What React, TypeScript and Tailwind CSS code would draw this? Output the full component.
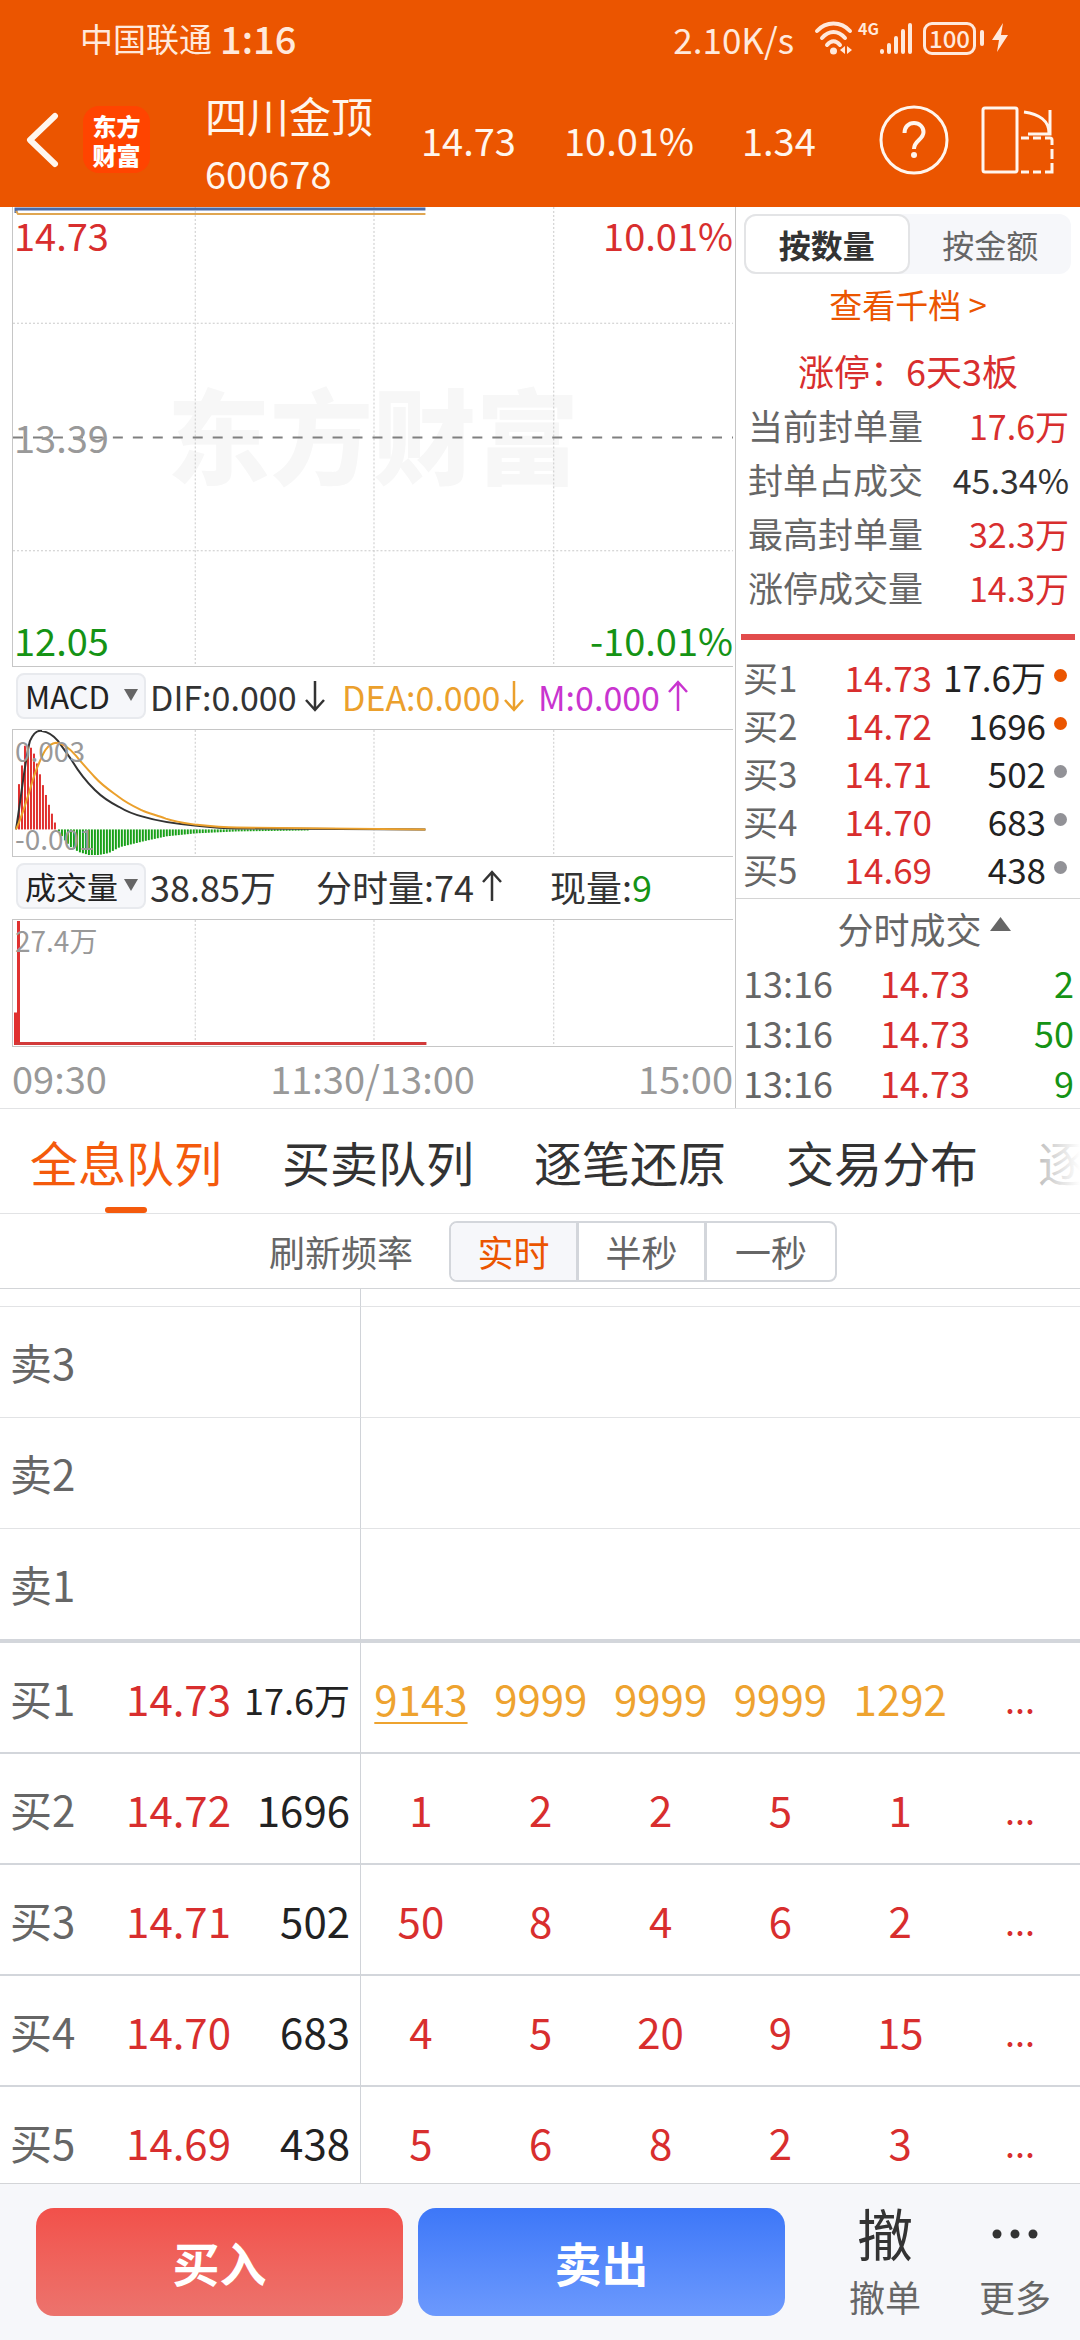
/**
 * Stock level-2 queue page
 *
 * Intraday charts and order book on top, full order queue below, trade bar at the bottom
 */

import React, { useState } from 'react';
import clsx from 'clsx';

type Point = [number, number];

const SEAL_STATS = [
  { label: '当前封单量', value: '17.6万', up: true },
  { label: '封单占成交', value: '45.34%', up: false },
  { label: '最高封单量', value: '32.3万', up: true },
  { label: '涨停成交量', value: '14.3万', up: true },
];

const BIDS = [
  { label: '买1', price: '14.73', volume: '17.6万', hot: true, queue: ['9143', '9999', '9999', '9999', '1292'] },
  { label: '买2', price: '14.72', volume: '1696', hot: true, queue: ['1', '2', '2', '5', '1'] },
  { label: '买3', price: '14.71', volume: '502', hot: false, queue: ['50', '8', '4', '6', '2'] },
  { label: '买4', price: '14.70', volume: '683', hot: false, queue: ['4', '5', '20', '9', '15'] },
  { label: '买5', price: '14.69', volume: '438', hot: false, queue: ['5', '6', '8', '2', '3'] },
];

const ASKS = ['卖3', '卖2', '卖1'];

const TRADES = [
  { time: '13:16', price: '14.73', volume: '2' },
  { time: '13:16', price: '14.73', volume: '50' },
  { time: '13:16', price: '14.73', volume: '9' },
];

const TABS = ['全息队列', '买卖队列', '逐笔还原', '交易分布', '逐笔成交'];
const RATES = ['实时', '半秒', '一秒'];

// Top of each red MACD bar, one bar every 3 units
const MACD_UP = [55, 36, 16, 17, 18, 24, 34, 45, 56, 66, 76, 85, 94];
// Envelope of the green MACD bars: x, depth
const MACD_DOWN: Point[] = [
  [45, 2], [50, 10], [57, 18], [65, 23], [75, 26], [85, 26], [95, 24], [106, 18],
  [130, 12], [153, 7], [182, 4], [224, 2], [300, 1],
];

const depthAt = (x: number) => {
  for (let i = 1; i < MACD_DOWN.length; i++) {
    const [x0, d0] = MACD_DOWN[i - 1];
    const [x1, d1] = MACD_DOWN[i];
    if (x <= x1) return d0 + ((d1 - d0) * (x - x0)) / (x1 - x0);
  }
  return 0;
};

const GREEN_BARS = Array.from({ length: 84 }, (_, i) => 45 + i * 3);

const StatusBar = () => (
  <div className="flex h-[76px] items-center pl-20 pr-[72px] text-[#ffe9dc]">
    <span className="text-[33px] leading-none">中国联通</span>
    <span className="ml-2 text-[38px] font-medium leading-none">1:16</span>
    <span className="ml-auto text-[35px] leading-none">2.10K/s</span>
    <svg className="ml-5 h-9 w-10" viewBox="0 0 40 36" fill="none" stroke="currentColor" strokeWidth="4" strokeLinecap="round">
      <path d="M3 11C12 1 27 1 36 11" />
      <path d="M8 18C15 10 24 10 31 18" />
      <path d="M13 25C17 20 22 20 26 25" />
      <circle cx="19.500" cy="31" r="3.500" fill="currentColor" stroke="none" />
      <path d="M31 26v8l-5-4zM33 26v8l5-4z" fill="currentColor" stroke="none" />
    </svg>
    <div className="ml-1 flex h-9 items-start">
      <span className="text-[16px] font-bold leading-none">4G</span>
      <svg className="h-9 w-9" viewBox="0 0 36 36" fill="none" stroke="currentColor" strokeWidth="4" strokeLinecap="round">
        <path d="M3 31v1M10 25v7M17 18v14M24 11v21M31 5v27" />
      </svg>
    </div>
    <div className="ml-2 flex items-center">
      <span className="flex h-[33px] w-[53px] items-center justify-center rounded-[9px] border-3 border-current text-[24px] font-medium leading-none">
        100
      </span>
      <span className="ml-1 h-4 w-1 rounded-full bg-current" />
    </div>
    <svg className="ml-2 h-8 w-4" viewBox="0 0 16 32" fill="currentColor">
      <path d="M11 1L0 18h7L5 30 16 13H9z" />
    </svg>
  </div>
);

const Header = () => (
  <header className="bg-[#eb5500] text-[#fff6ee]">
    <StatusBar />
    <div className="flex h-[131px] items-center pb-1 pl-[25px] pr-[25px]">
      <button aria-label="返回" className="shrink-0">
        <svg className="h-14 w-9" viewBox="0 0 36 56" fill="none" stroke="currentColor" strokeWidth="6" strokeLinecap="round" strokeLinejoin="round">
          <path d="M30 4L5 28l25 24" />
        </svg>
      </button>
      <div className="ml-[22px] flex size-[67px] shrink-0 items-center justify-center rounded-2xl bg-[#ff4400] text-[24px] font-black leading-[29px] text-white">
        <span className="w-12 break-all">东方财富</span>
      </div>
      <div className="ml-[55px] flex flex-col pt-2">
        <h1 className="text-[42px] leading-[58px]">四川金顶</h1>
        <span className="text-[38px] leading-[58px]">600678</span>
      </div>
      <div className="ml-12 flex flex-1 items-center gap-12 text-[38px]">
        <span>14.73</span>
        <span>10.01%</span>
        <span>1.34</span>
      </div>
      <button aria-label="帮助" className="shrink-0">
        <svg className="size-[70px]" viewBox="0 0 70 70" fill="none" stroke="currentColor" strokeWidth="3">
          <circle cx="35" cy="35" r="33" />
          <path d="M25.500 28c0-6 4-10 9.500-10s9.500 4 9.500 9c0 8-9.500 8-9.500 17" strokeWidth="4" />
          <circle cx="35" cy="50" r="3" fill="currentColor" stroke="none" />
        </svg>
      </button>
      <button aria-label="横屏" className="ml-8 shrink-0">
        <svg className="h-[68px] w-[74px]" viewBox="0 0 74 68" fill="none" stroke="currentColor" strokeWidth="3">
          <rect x="2" y="2" width="34" height="64" rx="2" />
          <path d="M43 6C58 8 68 15 68 27M69 4v24H47" />
          <path d="M40 32h8M52 32h8M64 32h5q2 0 2 2v5M71 43v10M71 57v9h-7M60 66h-8M48 66h-8" />
        </svg>
      </button>
    </div>
  </header>
);

interface IndicatorSelectProps {
  label: string;
  options: string[];
}

const IndicatorSelect: React.FC<IndicatorSelectProps> = ({ label, options }) => (
  <div className="relative h-[46px] w-[130px] shrink-0">
    <select
      aria-label={label}
      className="block h-full w-full appearance-none rounded-lg border-2 border-[#e8eaee] bg-[#f6f7fa] pl-[7px] text-[31px] leading-[42px] text-[#222]"
    >
      {options.map((option) => (
        <option key={option}>{option}</option>
      ))}
    </select>
    <svg className="pointer-events-none absolute right-2 top-4 h-3 w-[14px]" viewBox="0 0 14 12" fill="#666">
      <path d="M0 0h14L7 12z" />
    </svg>
  </div>
);

const Arrow = ({ up = false }: { up?: boolean }) => (
  <svg className="h-8 w-5 shrink-0" viewBox="0 0 20 32" fill="none" stroke="currentColor" strokeWidth="2.500">
    {up ? <path d="M10 31V3M1 12l9-10 9 10" /> : <path d="M10 1v28M1 20l9 10 9-10" />}
  </svg>
);

const GridColumns = ({ height }: { height: number }) => (
  <path
    d={`M182.500 0V${height}M361.500 0V${height}M541.500 0V${height}`}
    stroke="#c9c9c9"
    strokeDasharray="2 2"
    fill="none"
  />
);

const PriceChart = () => (
  <div className="relative h-[460px] border-b border-l border-[#c6c6c6] text-[38px] leading-[56px]">
    <div className="absolute inset-0 flex items-center justify-center pb-2 text-[103px] font-black text-[#f7f7f7]">
      东方财富
    </div>
    <svg className="absolute inset-0 h-full w-full" viewBox="0 0 721 460" preserveAspectRatio="none" fill="none">
      <GridColumns height={460} />
      <path d="M0 116.500H721M0 344.500H721" stroke="#c9c9c9" strokeDasharray="2 2" />
      <path d="M0 231H721" stroke="#808080" strokeWidth="2" strokeDasharray="10 10" />
      <path d="M3 6V2H413" stroke="#4a6ba8" strokeWidth="3" />
      <path d="M3 4l2 3H413" stroke="#e0a651" strokeWidth="2" />
    </svg>
    <span className="absolute left-px top-0 text-[#d82e2e]">14.73</span>
    <span className="absolute right-0 top-0 text-[#d82e2e]">10.01%</span>
    <span className="absolute left-px top-[202px] text-[#999]">13.39</span>
    <span className="absolute bottom-0 left-px leading-[52px] text-[#159315]">12.05</span>
    <span className="absolute bottom-0 right-0 leading-[52px] text-[#159315]">-10.01%</span>
  </div>
);

const MacdChart = () => (
  <div className="relative h-32 border-y border-l border-[#c6c6c6] text-[28px] leading-8 text-[#999]">
    <svg className="absolute inset-0 h-full w-full" viewBox="0 0 721 128" preserveAspectRatio="none" fill="none">
      <GridColumns height={128} />
      {MACD_UP.map((top, i) => (
        <rect key={i} x={5 + i * 3} y={top} width="2" height={101 - top} fill="#e0302f" />
      ))}
      {GREEN_BARS.map((x) => (
        <rect key={x} x={x} y="101" width="2" height={depthAt(x)} fill="#18a018" />
      ))}
      <path
        d="M3 101C8 70 12 30 17 11C21 2 25 0 29 1C35 2 40 5 45 11C50 18 54 24 59 31C66 43 74 53 82 61C90 69 98 74 106 78C114 83 122 86 130 88C143 92 160 95 182 97C200 99 215 100 224 100L413 101"
        stroke="#333"
        strokeWidth="2"
      />
      <path
        d="M3 101C9 88 12 76 16 64C20 50 22 42 26 34C30 24 34 14 43 13C50 13 56 18 63 26C70 35 76 41 82 48C90 57 98 62 106 68C115 75 122 78 130 82C140 86 148 88 153 90C165 94 175 95 182 96C200 98 215 99 224 99L413 101"
        stroke="#eba02c"
        strokeWidth="2"
      />
    </svg>
    <span className="absolute left-0.5 top-1">0.003</span>
    <span className="absolute bottom-0.5 left-0.5">-0.001</span>
  </div>
);

const VolumeChart = () => (
  <div className="relative h-32 border-y border-l border-[#c6c6c6] text-[28px] leading-8 text-[#999]">
    <svg className="absolute inset-0 h-full w-full" viewBox="0 0 721 128" preserveAspectRatio="none" fill="none">
      <GridColumns height={128} />
      <path d="M2.500 94V127M5.500 1V127" stroke="#e0302f" strokeWidth="3" />
      <path d="M2 125.500H414" stroke="#d23a3a" strokeWidth="3" />
    </svg>
    <span className="absolute left-0.5 top-1">27.4万</span>
  </div>
);

const ChartColumn = () => (
  <div className="flex flex-col pl-3 pr-0.5">
    <PriceChart />
    <div className="flex h-[62px] items-center whitespace-nowrap pb-1 pl-1 text-[34px] text-[#333]">
      <IndicatorSelect label="副图指标一" options={['MACD', 'KDJ', 'RSI']} />
      <span className="ml-1 flex w-48 items-center gap-2">DIF:0.000<Arrow /></span>
      <span className="flex w-[196px] items-center gap-1 text-[#eba02c]">DEA:0.000<Arrow /></span>
      <span className="flex items-center gap-2 text-[#c934cf]">M:0.000<Arrow up /></span>
    </div>
    <MacdChart />
    <div className="flex h-[62px] items-center whitespace-nowrap pb-1 pl-1 text-[36px] text-[#333]">
      <IndicatorSelect label="副图指标二" options={['成交量', '成交额']} />
      <span className="ml-1">38.85万</span>
      <span className="ml-10 flex items-center gap-2">分时量:74<Arrow up /></span>
      <span className="ml-12">
        现量:<span className="text-[#159315]">9</span>
      </span>
    </div>
    <VolumeChart />
    <div className="flex h-[61px] items-center justify-between text-[38px] text-[#999]">
      <span>09:30</span>
      <span>11:30/13:00</span>
      <span>15:00</span>
    </div>
  </div>
);

const BookColumn = () => {
  const [mode, setMode] = useState('按数量');

  return (
    <div className="flex flex-col border-l border-[#c6c6c6] pt-[7px] text-[35px]">
      <div className="ml-2 mr-[9px] flex h-[60px] rounded-xl bg-[#f6f7fa] text-[32px]">
        {['按数量', '按金额'].map((item) => (
          <button
            key={item}
            onClick={() => setMode(item)}
            className={clsx(
              'flex-1 rounded-xl',
              mode === item ? 'border-2 border-[#e3e4e6] bg-white font-bold text-[#333]' : 'text-[#666]',
            )}
          >
            {item}
          </button>
        ))}
      </div>
      <a href="#depth" className="block h-[66px] text-center text-[33px] leading-[60px] text-[#eb5500]">
        查看千档 &gt;
      </a>
      <p className="h-[58px] text-center text-[36px] leading-[60px] text-[#d82e2e]">涨停：6天3板</p>
      <dl className="pl-3 pr-[11px]">
        {SEAL_STATS.map((stat) => (
          <div key={stat.label} className="flex h-[54px] items-center justify-between whitespace-nowrap">
            <dt className="text-[#666]">{stat.label}</dt>
            <dd className={clsx('text-[34px]', stat.up ? 'text-[#d82e2e]' : 'text-[#333]')}>{stat.value}</dd>
          </div>
        ))}
      </dl>
      <div className="mx-[5px] mt-5 h-1.5 bg-[#e24c4c]" />
      <table className="mb-[5px] mt-[13px] w-full table-fixed text-right leading-[48px]">
        <tbody>
          {BIDS.map((bid) => (
            <tr key={bid.label}>
              <th className="p-0 pl-[7px] text-left font-normal text-[#666]">{bid.label}</th>
              <td className="w-[110px] p-0 text-[#d82e2e]">{bid.price}</td>
              <td className="w-[114px] p-0 text-[#222]">{bid.volume}</td>
              <td className="w-[34px] p-0">
                <span className={clsx('mb-1 ml-2 block size-[13px] rounded-full', bid.hot ? 'bg-[#eb5500]' : 'bg-[#929297]')} />
              </td>
            </tr>
          ))}
        </tbody>
      </table>
      <button className="flex h-[59px] items-center justify-center gap-2 border-t border-[#d4d4d4] pl-8 text-[36px] text-[#666]">
        分时成交
        <svg className="mb-2 h-[14px] w-[21px]" viewBox="0 0 21 14" fill="currentColor">
          <path d="M10.500 0L21 14H0z" />
        </svg>
      </button>
      <table className="w-full table-fixed text-right text-[36px] leading-[50px]">
        <tbody>
          {TRADES.map((trade, i) => (
            <tr key={i}>
              <td className="p-0 pl-[7px] text-left text-[#666]">{trade.time}</td>
              <td className="p-0 text-[#d82e2e]">{trade.price}</td>
              <td className="w-[110px] p-0 pr-1.5 text-[#159315]">{trade.volume}</td>
            </tr>
          ))}
        </tbody>
      </table>
    </div>
  );
};

const QueueTabs = () => {
  const [active, setActive] = useState(TABS[0]);

  return (
    <nav className="relative flex h-[106px] gap-[60px] overflow-hidden border-y border-[#e2e3e5] pl-[30px]">
      {TABS.map((tab) => (
        <button
          key={tab}
          onClick={() => setActive(tab)}
          className={clsx(
            'flex shrink-0 flex-col items-center pt-1.5 text-[48px] leading-[92px]',
            active === tab ? 'text-[#f45a0c]' : 'text-[#333]',
          )}
        >
          {tab}
          {active === tab && <span className="h-1.5 w-[42px] shrink-0 rounded-sm bg-current" />}
        </button>
      ))}
      <div className="pointer-events-none absolute inset-y-0 right-0 w-20 bg-gradient-to-r from-white/40 to-white" />
    </nav>
  );
};

const RateBar = () => {
  const [rate, setRate] = useState(RATES[0]);

  return (
    <div className="flex h-[75px] items-center justify-center gap-9 border-b border-[#d3d5d8] pl-[26px] text-[36px] text-[#666]">
      <span>刷新频率</span>
      <div className="flex h-[61px] divide-x-3 divide-[#d3d6db] overflow-hidden rounded-lg border-2 border-[#d3d6db]">
        {RATES.map((item) => (
          <button
            key={item}
            onClick={() => setRate(item)}
            className={clsx('w-32', rate === item && 'bg-[#f6f7fa] text-[#eb5500]')}
          >
            {item}
          </button>
        ))}
      </div>
    </div>
  );
};

const QueueTable = () => (
  <div className="min-h-0 flex-1 overflow-hidden">
    <table className="w-full table-fixed border-separate border-spacing-0 text-[42px] leading-[60px]">
      <colgroup>
        <col className="w-[110px]" />
        <col className="w-[121px]" />
        <col className="w-[130px]" />
        <col span={6} />
      </colgroup>
      <tbody>
        <tr>
          <td colSpan={3} className="h-[18px] border-b border-r border-b-[#e2e3e5] border-r-[#d0d3d8] p-0" />
          <td colSpan={6} className="h-[18px] border-b border-[#e2e3e5] p-0" />
        </tr>
        {ASKS.map((ask) => {
          const last = ask === '卖1';
          const edge = last ? 'h-[114px] border-b-4 border-b-[#d3d6db]' : 'h-[111px] border-b border-b-[#e2e3e5]';
          return (
            <tr key={ask}>
              <th colSpan={3} className={clsx('border-r border-r-[#d0d3d8] p-0 pl-[10px] text-left font-normal text-[#666]', edge)}>
                {ask}
              </th>
              <td colSpan={6} className={clsx('p-0', edge)} />
            </tr>
          );
        })}
        {BIDS.map((bid, row) => (
          <tr key={bid.label} className="*:h-[111px] *:border-b-2 *:border-b-[#d3d6db] *:p-0">
            <th className="text-left font-normal text-[#666]">
              <span className="pl-[10px]">{bid.label}</span>
            </th>
            <td className="text-right text-[#d82e2e]">{bid.price}</td>
            <td className="border-r border-r-[#d0d3d8] text-right text-[#222]">
              <span className={clsx('pr-[10px]', row === 0 && 'text-[36px]')}>{bid.volume}</span>
            </td>
            {bid.queue.map((lots, i) => (
              <td key={i} className={clsx('text-center', row === 0 ? 'text-[#eea32f]' : 'text-[#d82e2e]')}>
                <span className={clsx(row === 0 && i === 0 && 'underline decoration-2 underline-offset-[6px]')}>{lots}</span>
              </td>
            ))}
            <td className="text-center text-[36px] text-[#d82e2e]">...</td>
          </tr>
        ))}
      </tbody>
    </table>
  </div>
);

const TradeBar = () => (
  <footer className="flex h-[157px] shrink-0 items-center border-t border-[#d3d5d8] bg-[#f6f7fa] pl-9">
    <div className="flex flex-1 gap-[15px] text-[47px] font-bold text-white">
      <button className="h-[108px] flex-1 rounded-[18px] bg-gradient-to-b from-[#f2504a] to-[#ec736d]">买入</button>
      <button className="h-[108px] flex-1 rounded-[18px] bg-gradient-to-b from-[#3d77f8] to-[#6c99fd]">卖出</button>
    </div>
    <button className="ml-[35px] flex w-[130px] flex-col items-center text-[36px] text-[#666]">
      <span className="text-[56px] leading-[68px] text-[#333]">撤</span>
      <span className="leading-[60px]">撤单</span>
    </button>
    <button className="flex w-[130px] flex-col items-center text-[36px] text-[#666]">
      <svg className="h-[68px] w-12" viewBox="0 0 48 68" fill="#333">
        <circle cx="6" cy="36" r="4.500" />
        <circle cx="24" cy="36" r="4.500" />
        <circle cx="42" cy="36" r="4.500" />
      </svg>
      <span className="leading-[60px]">更多</span>
    </button>
  </footer>
);

export default function App() {
  return (
    <div className="flex h-screen flex-col overflow-hidden bg-white font-['Noto_Sans_CJK_SC',sans-serif]">
      <Header />
      <main className="flex min-h-0 flex-1 flex-col">
        <section className="grid shrink-0 grid-cols-[735fr_345fr]">
          <ChartColumn />
          <BookColumn />
        </section>
        <QueueTabs />
        <RateBar />
        <QueueTable />
      </main>
      <TradeBar />
    </div>
  );
}
